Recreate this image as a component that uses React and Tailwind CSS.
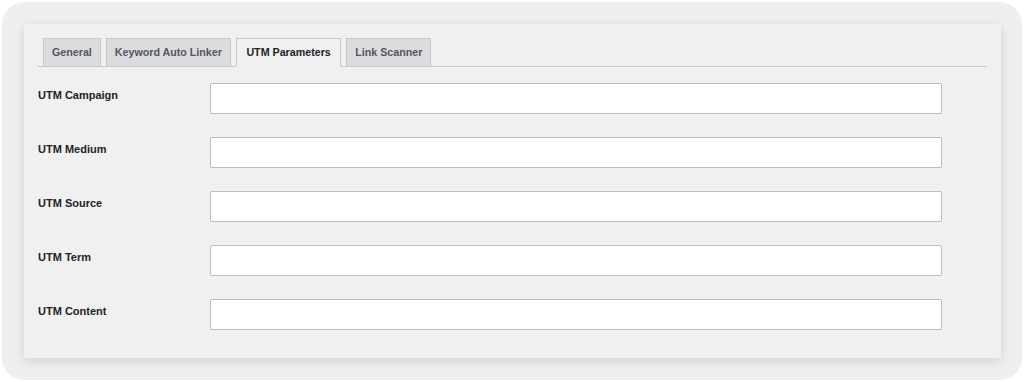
const tabs = [
  { label: "General" },
  { label: "Keyword Auto Linker" },
  { label: "UTM Parameters", active: true },
  { label: "Link Scanner" },
];

const fields = ["UTM Campaign", "UTM Medium", "UTM Source", "UTM Term", "UTM Content"];

export default function App() {
  return (
    <div className="h-[382px] w-[1024px] bg-white p-[2px] font-['Liberation_Sans',Arial,sans-serif]">
      <div className="h-full rounded-[22px] bg-[#efefef] px-[22px] pb-[22px] pt-[22px]">
        <div className="h-[334px] w-[977px] bg-[#f0f0f0] px-[14px] pt-[14px] shadow-[0_3px_10px_rgba(0,0,0,0.13)]">
          <div className="flex gap-[5px] border-b border-[#c8c8ca] pl-[5px]">
            {tabs.map((t) => (
              <div
                key={t.label}
                className={`-mb-px flex h-[29px] items-center border text-[10.7px] font-bold ${
                  t.active
                    ? "border-[#c8c8ca] border-b-[#f0f0f0] bg-[#f0f0f0] px-[9.5px] text-[#1d2327]"
                    : "border-[#c8c8ca] bg-[#dcdcde] px-[8px] text-[#50575e]"
                }`}
              >
                {t.label}
              </div>
            ))}
          </div>
          <div className="flex flex-col gap-[23px] pt-[16px]">
            {fields.map((f) => (
              <div key={f} className="flex items-start">
                <div className="w-[172px] pt-[4px] text-[11px] font-bold text-[#1d2327]">{f}</div>
                <input
                  type="text"
                  className="h-[31px] w-[732px] rounded-[2px] border border-[#bdbdbd] bg-white outline-none"
                />
              </div>
            ))}
          </div>
        </div>
      </div>
    </div>
  );
}
